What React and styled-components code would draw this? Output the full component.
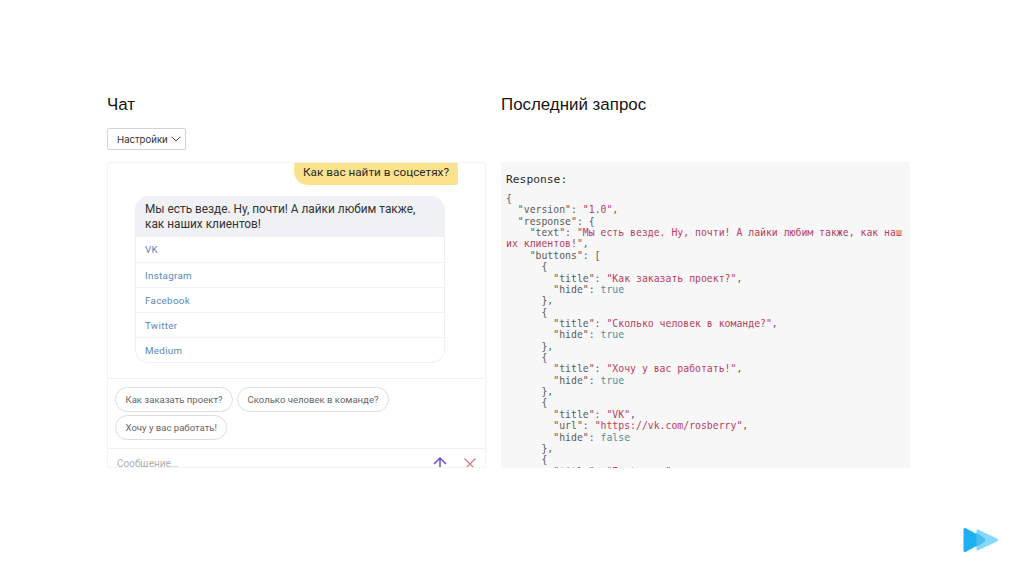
import React from "react";
import styled, { createGlobalStyle } from "styled-components";

const Global = createGlobalStyle`
  html, body { margin: 0; padding: 0; background: #fff; }
  body { font-family: "Liberation Sans", Arial, sans-serif; }
`;
const Page = styled.div`
  width: 1024px; height: 576px; box-sizing: border-box; overflow: hidden;
  padding: 94px 25px 0 107px; display: flex; flex-direction: column;
`;
const Columns = styled.div`
  display: grid; grid-template-columns: 379px 409px; column-gap: 15px;
  grid-template-rows: 21px 47px 306px;
`;
const Title = styled.h2`
  margin: 0; font-size: 16.9px; line-height: 21px; font-weight: 400; color: #161616;
`;
const Toolbar = styled.div` padding-top: 13px; grid-column: ${p => p.$col}; `;
const SettingsButton = styled.button`
  width: 79px; height: 22px; box-sizing: border-box; border: 1px solid #d4d4d4; border-radius: 2px;
  background: #fff; display: flex; align-items: center; gap: 3px; padding: 0 0 0 9px;
  font-family: Inter, sans-serif; font-size: 9.6px; color: #333;
`;
const ChatPanel = styled.section`
  height: 306px; box-sizing: border-box; border: 1px solid #f3f3f3; border-radius: 3px;
  display: flex; flex-direction: column; overflow: hidden; font-family: Roboto, sans-serif;
`;
const Messages = styled.div`
  height: 215px; flex: none; overflow: hidden; display: flex; flex-direction: column;
  justify-content: flex-end; padding: 0 27px 15px; box-sizing: border-box;
`;
const UserBubble = styled.div`
  align-self: flex-end; height: 34px; box-sizing: border-box; padding: 13px 9px 0 9px; flex: none;
  background: #fbe28c; border-radius: 14px 14px 2px 14px; font-size: 11.75px; line-height: 17px; color: #2a2a2a;
  margin-bottom: 11px; white-space: nowrap;
`;
const BotCard = styled.div`
  width: 310px; margin-left: 0; flex: none; border: 1px solid #f0f0f0; border-top: 0; border-radius: 14px;
  box-sizing: border-box; overflow: hidden; align-self: flex-start;
`;
const BotText = styled.div`
  height: 41px; box-sizing: border-box; background: #f0f1f5; padding: 6px 9px; font-size: 11.85px;
  line-height: 15px; color: #333;
`;
const LinkRow = styled.div`
  height: 25px; box-sizing: border-box; padding: 0 9px; display: flex; align-items: center; font-size: 9.8px;
  letter-spacing: 0.3px; color: #5a88b8; border-top: ${p => (p.$first ? "0" : "1px solid #f3f3f3")};
`;
const Suggestions = styled.div`
  height: 70px; flex: none; box-sizing: border-box; border-top: 1px solid #f1f1f1; padding: 8px 7px 0;
  display: flex; flex-wrap: wrap; align-content: flex-start; gap: 3px 4px;
`;
const Pill = styled.div`
  height: 25px; box-sizing: border-box; border: 1px solid #dedede; border-radius: 13px; padding: 0 9.5px;
  font-size: 9.55px; line-height: 23px; color: #666; white-space: nowrap;
`;
const InputBar = styled.div`
  flex: 1; border-top: 1px solid #f1f1f1; display: flex; align-items: flex-start; padding: 7px 7px 0 9px; gap: 14px;
`;
const Placeholder = styled.div`
  flex: 1; font-size: 10px; line-height: 15px; color: #b0b0b0;
`;
const IconButton = styled.div` width: 16px; height: 16px; flex: none; display: flex; `;
const Code = styled.section`
  height: 306px; box-sizing: border-box; background: #f7f7f7; overflow: hidden; padding: 10px 5px 0 5px;
`;
const Label = styled.div`
  font-family: "DejaVu Sans Mono", monospace; font-size: 11.3px; line-height: 15px; color: #2a2a2a; margin-bottom: 6px;
`;
const Pre = styled.pre`
  margin: 0; font-family: "DejaVu Sans Mono", monospace; font-size: 9.82px; line-height: 11.36px; color: #5c5c5c;
  white-space: pre-wrap; word-break: break-all;
`;
const Str = styled.span` color: #b8405f; `;
const Bool = styled.span` color: #4f8f96; `;
const Footer = styled.footer` display: flex; justify-content: flex-end; padding-top: 59px; `;

const links = ["VK", "Instagram", "Facebook", "Twitter", "Medium"];
const pills = ["Как заказать проект?", "Сколько человек в команде?", "Хочу у вас работать!"];
const k = (t) => `"${t}"`;
const lines = [
  ["{"],
  ['  "version": ', ["s", k("1.0")], ","],
  ['  "response": {'],
  ['    "text": ', ["s", k("Мы есть везде. Ну, почти! А лайки любим также, как наших клиентов!")], ","],
  ['    "buttons": ['],
  ["      {"],
  ['        "title": ', ["s", k("Как заказать проект?")], ","],
  ['        "hide": ', ["b", "true"]],
  ["      },"],
  ["      {"],
  ['        "title": ', ["s", k("Сколько человек в команде?")], ","],
  ['        "hide": ', ["b", "true"]],
  ["      },"],
  ["      {"],
  ['        "title": ', ["s", k("Хочу у вас работать!")], ","],
  ['        "hide": ', ["b", "true"]],
  ["      },"],
  ["      {"],
  ['        "title": ', ["s", k("VK")], ","],
  ['        "url": ', ["s", k("https://vk.com/rosberry")], ","],
  ['        "hide": ', ["b", "false"]],
  ["      },"],
  ["      {"],
  ['        "title": ', ["s", k("Instagram")], ","],
];

export default function App() {
  return (
    <Page>
      <Global />
      <Columns>
        <Title>Чат</Title>
        <Title>Последний запрос</Title>
        <Toolbar $col="1 / 3">
          <SettingsButton>
            Настройки
            <svg width="10" height="6" viewBox="0 0 10 6" fill="none" stroke="#444" strokeWidth="1">
              <path d="M.7.8 5 5 9.3.8" />
            </svg>
          </SettingsButton>
        </Toolbar>
        <ChatPanel>
          <Messages>
            <UserBubble>Как вас найти в соцсетях?</UserBubble>
            <BotCard>
              <BotText>Мы есть везде. Ну, почти! А лайки любим также, как наших клиентов!</BotText>
              {links.map((l, i) => <LinkRow key={l} $first={i === 0}>{l}</LinkRow>)}
            </BotCard>
          </Messages>
          <Suggestions>
            {pills.map((p) => <Pill key={p}>{p}</Pill>)}
          </Suggestions>
          <InputBar>
            <Placeholder>Сообщение...</Placeholder>
            <IconButton>
              <svg width="16" height="16" viewBox="0 0 16 16" fill="none" stroke="#6a4fc9" strokeWidth="1.5">
                <path d="M8 14V2.5M2 8l6-6 6 6" />
              </svg>
            </IconButton>
            <IconButton>
              <svg width="16" height="16" viewBox="0 0 16 16" fill="none" stroke="#cc7f80" strokeWidth="1.3">
                <path d="M2.5 2.5 13.5 13.5M13.5 2.5 2.5 13.5" />
              </svg>
            </IconButton>
          </InputBar>
        </ChatPanel>
        <Code>
          <Label>Response:</Label>
          <Pre>
            {lines.map((parts, i) => (
              <React.Fragment key={i}>
                {parts.map((p, j) =>
                  typeof p === "string" ? p : p[0] === "s" ? <Str key={j}>{p[1]}</Str> : <Bool key={j}>{p[1]}</Bool>
                )}
                {"\n"}
              </React.Fragment>
            ))}
          </Pre>
        </Code>
      </Columns>
      <Footer>
        <svg width="36" height="26" viewBox="0 0 36 26">
          <path d="M15 2.5 34 11.5Q36 13 34 14.5L15 23.5Q13.5 24 13.5 22.5V3.5Q13.5 2 15 2.5Z" fill="#84daf9" />
          <path d="M2.5 1 21 11Q23 13 21 15L2.5 25Q0.5 25.5 0.5 23.5V2.5Q0.5 0.5 2.5 1Z" fill="#1fb0f4" />
          <path d="M13.5 5.5 21 11Q23 13 21 15L13.5 20Z" fill="#4cbcf2" />
        </svg>
      </Footer>
    </Page>
  );
}
